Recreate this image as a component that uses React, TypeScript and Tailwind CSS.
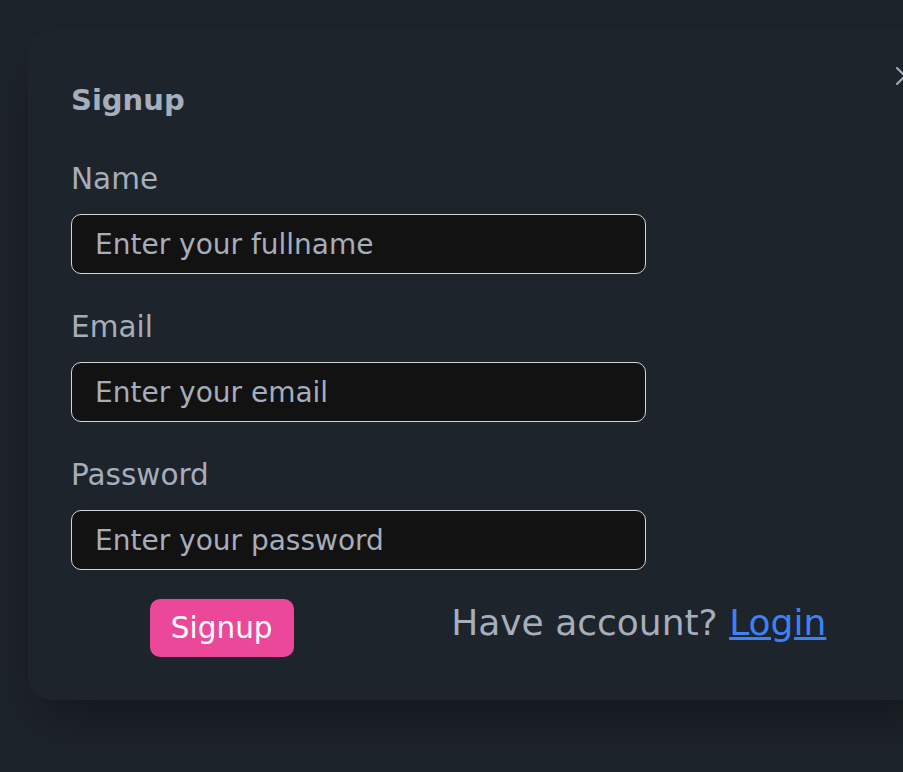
import React from "react";

const font = { fontFamily: '"DejaVu Sans", "Liberation Sans", sans-serif' };

function Field({ label, placeholder, type, first }: { label: string; placeholder: string; type: string; first?: boolean }) {
  return (
    <div className={first ? "mt-[43px]" : "mt-[35px]"}>
      <label className="block text-[29.5px] leading-[36px] text-[#a6adbb]">{label}</label>
      <input
        type={type}
        placeholder={placeholder}
        className="mt-[17px] block h-[60px] w-[575px] rounded-[10px] border-[1.5px] border-[#d4d4d8] bg-[#121212] px-[23px] text-[28px] text-[#a6adbb] placeholder:text-[#a6adbb] outline-none"
      />
    </div>
  );
}

export default function App() {
  return (
    <div className="relative h-[772px] w-full overflow-hidden bg-[#1d232a]" style={font}>
      <div className="relative ml-[28px] mt-[30px] w-[920px] rounded-[24px] bg-[#1e242b] pb-[43px] pl-[43px] pr-[43px] pt-[52px] shadow-[0_25px_50px_-12px_rgba(0,0,0,0.35)]">
        <svg
          className="absolute left-[868px] top-[37px]"
          width="18"
          height="18"
          viewBox="0 0 18 18"
          fill="none"
          stroke="#a6adbb"
          strokeWidth="2"
          strokeLinecap="round"
        >
          <path d="M1 1 L17 17 M17 1 L1 17" />
        </svg>
        <h3 className="text-[29px] font-bold leading-[36px] text-[#a6adbb]">Signup</h3>
        <Field first label="Name" placeholder="Enter your fullname" type="text" />
        <Field label="Email" placeholder="Enter your email" type="email" />
        <Field label="Password" placeholder="Enter your password" type="password" />
        <div className="mt-[29px] flex w-[834px] items-start justify-around">
          <button className="h-[58px] w-[144px] rounded-[10px] bg-[#ec4899] text-[29.5px] text-white">Signup</button>
          <p className="mt-[2px] text-[36px] leading-[44px] text-[#a6adbb]">
            Have account?{" "}
            <a href="#" className="text-[#3b82f6] underline">
              Login
            </a>
          </p>
        </div>
      </div>
    </div>
  );
}
